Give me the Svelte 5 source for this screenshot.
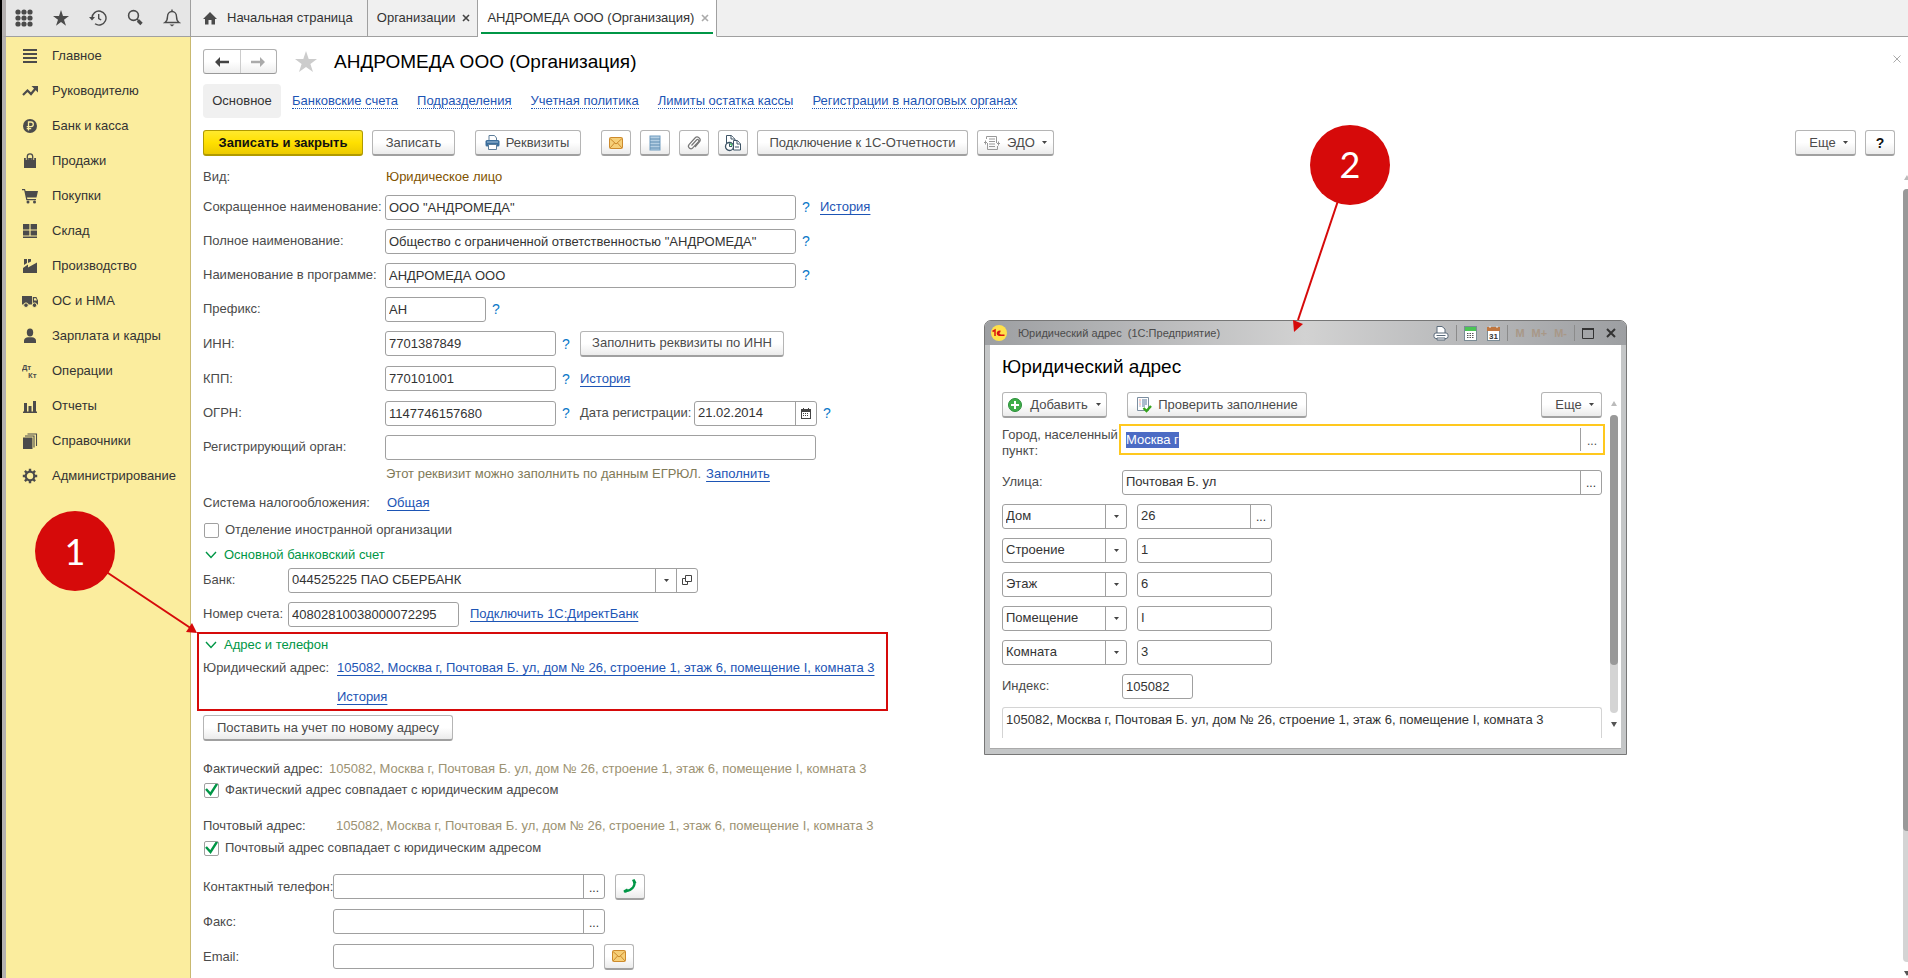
<script>
  import { onMount } from 'svelte';

  const menu = [
    ['list', 'Главное'],
    ['trend', 'Руководителю'],
    ['ruble', 'Банк и касса'],
    ['bag', 'Продажи'],
    ['cart', 'Покупки'],
    ['boxes', 'Склад'],
    ['factory', 'Производство'],
    ['truck', 'ОС и НМА'],
    ['person', 'Зарплата и кадры'],
    ['dtkt', 'Операции'],
    ['bars', 'Отчеты'],
    ['books', 'Справочники'],
    ['gear', 'Администрирование']
  ];
  const sections = [
    'Банковские счета',
    'Подразделения',
    'Учетная политика',
    'Лимиты остатка кассы',
    'Регистрации в налоговых органах'
  ];
  const address = '105082, Москва г, Почтовая Б. ул, дом № 26, строение 1, этаж 6, помещение I, комната 3';
  const parts = [
    ['Дом', '26', true],
    ['Строение', '1', false],
    ['Этаж', '6', false],
    ['Помещение', 'I', false],
    ['Комната', '3', false]
  ];
  let cityInput;
  onMount(() => {
    cityInput.focus();
    cityInput.select();
  });
</script>

{#snippet caret()}
  <svg class="caret" width="5" height="3" viewBox="0 0 5 3"><path d="M0 0h5L2.500 3z" fill="#444" /></svg>
{/snippet}

{#snippet mail()}
  <svg width="14" height="12" viewBox="0 0 14 12"><rect x=".5" y=".5" width="13" height="11" rx="1" fill="#f6cf78" stroke="#cd8a2c" /><path d="M1 1.500l6 5.500 6-5.500M1 11l4.500-5M13 11L8.500 6" fill="none" stroke="#cd8a2c" /></svg>
{/snippet}

{#snippet chevron()}
  <svg width="12" height="8" viewBox="0 0 12 8"><path d="M1 1l5 5.500L11 1" fill="none" stroke="#009646" stroke-width="1.400" /></svg>
{/snippet}

{#snippet menuIcon(name)}
  <svg width="16" height="16" viewBox="0 0 16 16" fill="#4b4b4b">
    {#if name === 'list'}
      <path d="M1 1h14v2H1zM1 5h14v2H1zM1 9h14v2H1zM1 13h14v2H1z" />
    {:else if name === 'trend'}
      <path d="M1 12l4.500-4.500 3.500 3.500 4.500-5.500" fill="none" stroke="#4b4b4b" stroke-width="2.200" /><path d="M9.500 3H16v6.500z" />
    {:else if name === 'ruble'}
      <circle cx="8" cy="8" r="7" /><path d="M6.500 12.500V4h2.500a2.300 2.300 0 0 1 0 4.600H4.700M4.700 10.600h4.500" fill="none" stroke="#faec9e" stroke-width="1.300" />
    {:else if name === 'bag'}
      <path d="M2 5h12v10H2z" /><path d="M5 7V4a3 3 0 0 1 6 0v3" fill="none" stroke="#faec9e" stroke-width="2.400" /><path d="M5.300 7V3.500a2.700 2.700 0 0 1 5.400 0V7" fill="none" stroke="#4b4b4b" stroke-width="1.300" />
    {:else if name === 'cart'}
      <path d="M0 1h3l.6 2H16l-1.500 6.500H5L5.300 11H14v1.300H4.300L2.200 2.300H0z" /><circle cx="6" cy="14" r="1.500" /><circle cx="12.500" cy="14" r="1.500" />
    {:else if name === 'boxes'}
      <path d="M1 1h6.400v5.500H1zM8.600 1H15v5.500H8.600zM1 7.500h6.400v5H1zM8.600 7.500H15v5H8.600zM1 13.500h14v1.500H1z" />
    {:else if name === 'factory'}
      <path d="M1 15v-5l5-3.500V9.500l9-5V15zM2 1h3v4L2 7zM6 1h3v2.500L6 5z" />
    {:else if name === 'truck'}
      <path d="M0 3h10v8.500H0zM10.800 4h3.600L16 7.500v4h-5.200z" /><path d="M12 5.300h2l1 2.200h-3z" fill="#faec9e" /><circle cx="4" cy="12.200" r="2.300" stroke="#faec9e" /><circle cx="12.500" cy="12.200" r="2.300" stroke="#faec9e" />
    {:else if name === 'person'}
      <ellipse cx="8" cy="4.500" rx="3.200" ry="4" /><path d="M2 15v-2.500c0-2 2-3 4-3.300h4c2 .3 4 1.300 4 3.300V15z" />
    {:else if name === 'dtkt'}
      <text x="0" y="7" class="tiny">Дт</text><text x="6" y="15" class="tiny">Кт</text>
    {:else if name === 'bars'}
      <path d="M1 13.500h14V15H1zM2 5h3v9H2zM6.500 8h3v6h-3zM11 3h3v11h-3z" />
    {:else if name === 'books'}
      <path d="M1 4.500h9.500V16H1z" /><path d="M3 3h9v11.500M5.500 1h9v12" fill="none" stroke="#4b4b4b" stroke-width="1.100" />
    {:else}
      <circle cx="8" cy="8" r="4.300" fill="none" stroke="#4b4b4b" stroke-width="2.200" /><path d="M8 .8v3M8 12.200v3M.8 8h3M12.200 8h3M2.900 2.900L5 5M11 11l2.100 2.100M2.900 13.100L5 11M11 5l2.100-2.100" stroke="#4b4b4b" stroke-width="2.400" />
    {/if}
  </svg>
{/snippet}

<div class="app">
  <header class="topbar">
    <div class="tools">
      <button class="plain" aria-label="Меню"><svg width="18" height="18" viewBox="0 0 18 18" fill="#4b4b4b">{#each [3, 9, 15] as x}{#each [3, 9, 15] as y}<circle cx={x} cy={y} r="2.600" />{/each}{/each}</svg></button>
      <button class="plain" aria-label="Избранное"><svg width="18" height="18" viewBox="0 0 18 18"><path d="M9 1l2 6h6l-5 3.700 2 6.100-5-3.800-5 3.800 2-6.100L1 7h6z" fill="#4b4b4b" /></svg></button>
      <button class="plain" aria-label="История"><svg width="18" height="18" viewBox="0 0 18 18" fill="none" stroke="#4b4b4b" stroke-width="1.400"><path d="M3 9A7 7 0 1 1 6 14.800M9.700 5v4.500l2.500 1.500" /><path d="M0 8h6L3 11.500z" fill="#4b4b4b" stroke="none" /></svg></button>
      <button class="plain" aria-label="Поиск"><svg width="18" height="18" viewBox="0 0 18 18" fill="none" stroke="#4b4b4b"><circle cx="7.500" cy="6.500" r="4.900" stroke-width="1.600" /><path d="M11 10l2 2" stroke-width="1.500" /><path d="M12 11.500l3.500 3.500" stroke-width="3.400" /></svg></button>
      <button class="plain" aria-label="Уведомления"><svg width="18" height="18" viewBox="0 0 18 18" fill="none" stroke="#4b4b4b" stroke-width="1.400"><path d="M2 13.500c2-1.500 2.500-3 2.500-6 0-3 2-5 4.500-5s4.500 2 4.500 5c0 3 .5 4.500 2.500 6z" /><path d="M9 .5v2" /><path d="M6.500 15.500h5L9 17.500z" fill="#4b4b4b" stroke="none" /></svg></button>
    </div>
    <nav class="tabs">
      <a class="tab home" href="#home"><svg width="14" height="13" viewBox="0 0 14 13"><path d="M7 0l7 7h-2v5.500H8.500V8h-3v4.500H2V7H0z" fill="#4b4b4b" /></svg>Начальная страница</a>
      <a class="tab" href="#orgs">Организации<svg width="8" height="8" viewBox="0 0 8 8"><path d="M1 1l6 6M7 1L1 7" stroke="#444" stroke-width="1.600" /></svg></a>
      <a class="tab active" href="#org">АНДРОМЕДА ООО (Организация)<svg width="8" height="8" viewBox="0 0 8 8"><path d="M1 1l6 6M7 1L1 7" stroke="#aaa" stroke-width="1.600" /></svg></a>
    </nav>
  </header>

  <div class="body">
    <aside>
      {#each menu as [icon, label]}
        <a href="#menu">{@render menuIcon(icon)}<span>{label}</span></a>
      {/each}
    </aside>

    <main>
      <div class="titlebar">
        <div class="nav">
          <button aria-label="Назад"><svg width="14" height="10" viewBox="0 0 14 10"><path d="M0 5l5-5v3.700h9v2.600H5V10z" fill="#444" /></svg></button>
          <button aria-label="Вперед"><svg width="14" height="10" viewBox="0 0 14 10"><path d="M14 5L9 0v3.700H0v2.600h9V10z" fill="#aaa" /></svg></button>
        </div>
        <svg width="24" height="22" viewBox="0 0 24 22"><path d="M12 0l2.700 8H23l-6.600 5 2.600 8-7-5-7 5 2.600-8L1 8h8.300z" fill="#ccc" /></svg>
        <h1>АНДРОМЕДА ООО (Организация)</h1>
        <button class="plain close" aria-label="Закрыть"><svg width="8" height="8" viewBox="0 0 8 8"><path d="M.5.5l7 7M7.500.5l-7 7" stroke="#aaa" /></svg></button>
      </div>

      <nav class="sections">
        <span class="current">Основное</span>
        {#each sections as s}<a href="#section">{s}</a>{/each}
      </nav>

      <div class="toolbar">
        <button class="btn primary">Записать и закрыть</button>
        <button class="btn save">Записать</button>
        <button class="btn icon-text"><svg width="15" height="15" viewBox="0 0 15 15"><path d="M4 5V.5h5.500L11.500 3v2" fill="#fff" stroke="#5d7d99" /><rect x=".5" y="5" width="14" height="6.500" rx="1.500" fill="#3b6e9c" /><path d="M2 7h11" stroke="#a9c4dc" /><path d="M3.500 9.500h8v5h-8z" fill="#fff" stroke="#5d7d99" /></svg>Реквизиты</button>
        <button class="btn square first" aria-label="Письмо">{@render mail()}</button>
        <button class="btn square" aria-label="Список"><svg width="12" height="16" viewBox="0 0 12 16"><rect x="1" y="1" width="10" height="14" fill="#b5cfe3" stroke="#6f9cc0" /><path d="M1 4h10M1 7h10M1 10h10M1 13h10" stroke="#5a8ab0" /></svg></button>
        <button class="btn square" aria-label="Файлы"><svg width="16" height="16" viewBox="0 0 16 16"><path d="M5.500 10.500l5-5.500a1.200 1.200 0 0 1 2 1.600L7 12.700a2.500 2.500 0 0 1-4-3L9 3a3 3 0 0 1 4.800 3.500L9 12" fill="none" stroke="#777" stroke-width="1.200" /></svg></button>
        <button class="btn square" aria-label="Отчеты"><svg width="18" height="18" viewBox="0 0 18 18" fill="#fff" stroke="#3e5466"><path d="M2.500 13V1.500h5L11 5v8" /><path d="M7 1.500V5h4" /><path d="M9.500 6.500h4l3 3.500v6h-7z" /><path d="M13 7v3h3.500M11 13h4" /><circle cx="5.500" cy="12.500" r="4" stroke-width="1.300" /><path d="M5.500 9v4l3-1.500A4 4 0 0 0 5.500 9z" fill="#1fb24a" stroke="none" /><path d="M5.500 9.500v3h2.500" /></svg></button>
        <button class="btn reports">Подключение к 1С-Отчетности</button>
        <button class="btn edo"><svg width="16" height="16" viewBox="0 0 16 16" fill="none" stroke="#999"><path d="M2.500 4V1.500h10V8M13.500 11v3.500h-10V8M5 4h6M5 6.500h6M5 9h6M5 11.500h6M0 7.500h3M13 8.500h3M1.500 5.500v4M14.500 6.500v4" /></svg>ЭДО{@render caret()}</button>
        <span class="grow"></span>
        <button class="btn more">Еще{@render caret()}</button>
        <button class="btn square help" aria-label="Справка">?</button>
      </div>

      <form class="form" onsubmit={(e) => e.preventDefault()}>
        <div class="row kind"><span class="lbl">Вид:</span><span class="brown">Юридическое лицо</span></div>
        <div class="row"><label class="lbl" for="short">Сокращенное наименование:</label><input id="short" class="long" value={'ООО "АНДРОМЕДА"'} /><span class="q">?</span><a href="#history">История</a></div>
        <div class="row"><label class="lbl" for="full">Полное наименование:</label><input id="full" class="long" value={'Общество с ограниченной ответственностью "АНДРОМЕДА"'} /><span class="q">?</span></div>
        <div class="row"><label class="lbl" for="name">Наименование в программе:</label><input id="name" class="long" value="АНДРОМЕДА ООО" /><span class="q">?</span></div>
        <div class="row"><label class="lbl" for="prefix">Префикс:</label><input id="prefix" class="short" value="АН" /><span class="q">?</span></div>
        <div class="row tall"><label class="lbl" for="inn">ИНН:</label><input id="inn" class="mid" value="7701387849" /><span class="q">?</span><button class="btn fill">Заполнить реквизиты по ИНН</button></div>
        <div class="row tall"><label class="lbl" for="kpp">КПП:</label><input id="kpp" class="mid" value="770101001" /><span class="q">?</span><a href="#history">История</a></div>
        <div class="row"><label class="lbl" for="ogrn">ОГРН:</label><input id="ogrn" class="mid" value="1147746157680" /><span class="q">?</span><label class="datelbl" for="date">Дата регистрации:</label><div class="field date"><input id="date" value="21.02.2014" /><button aria-label="Календарь"><svg width="10" height="11" viewBox="0 0 10 11"><path d="M0 1h10v10H0z" fill="#444" /><path d="M1 4h8v6H1z" fill="#fff" /><path d="M2 5.500h6M2 7.500h6" stroke="#444" stroke-dasharray="1 1" /><path d="M2.500 0v2M7.500 0v2" stroke="#444" /></svg></button></div><span class="q">?</span></div>
        <div class="row"><label class="lbl" for="organ">Регистрирующий орган:</label><input id="organ" class="organ" value="" /></div>
        <div class="row hint"><span class="olive">Этот реквизит можно заполнить по данным ЕГРЮЛ.</span><a href="#fill">Заполнить</a></div>
        <div class="row tax"><span class="lbl">Система налогообложения:</span><a href="#tax">Общая</a></div>
        <label class="check"><input type="checkbox" />Отделение иностранной организации</label>
        <h2 class="bank-head">{@render chevron()}Основной банковский счет</h2>
        <div class="row bank"><label class="lbl" for="bank">Банк:</label><div class="field bankfield"><input id="bank" value="044525225 ПАО СБЕРБАНК" /><button aria-label="Выбрать">{@render caret()}</button><button aria-label="Открыть"><svg width="10" height="10" viewBox="0 0 10 10" fill="none" stroke="#444"><path d="M3.500.5h6v6h-6zM3.500 3.500h-3v6h5v-3" /></svg></button></div></div>
        <div class="row bank"><label class="lbl" for="acc">Номер счета:</label><input id="acc" class="mid" value="40802810038000072295" /><a class="direct" href="#direct">Подключить 1С:ДиректБанк</a></div>

        <section class="marked">
          <h2>{@render chevron()}Адрес и телефон</h2>
          <div class="addr"><span class="lbl">Юридический адрес:</span><a href="#address">{address}</a></div>
          <div class="addr hist"><span class="lbl"></span><a href="#history">История</a></div>
        </section>

        <button class="btn register">Поставить на учет по новому адресу</button>
        <p class="static first-static"><span class="actual">Фактический адрес:</span><span class="sand">{address}</span></p>
        <label class="check"><input type="checkbox" checked />Фактический адрес совпадает с юридическим адресом</label>
        <p class="static second-static"><span class="postal">Почтовый адрес:</span><span class="sand">{address}</span></p>
        <label class="check"><input type="checkbox" checked />Почтовый адрес совпадает с юридическим адресом</label>
        <div class="row contact phone"><label class="lbl" for="phone">Контактный телефон:</label><div class="field"><input id="phone" /><button class="dots" aria-label="Выбрать телефон">...</button></div><button class="btn square" aria-label="Позвонить"><svg width="14" height="14" viewBox="0 0 14 14"><path d="M11 2c2 4.500-2 9.500-8 10" fill="none" stroke="#009646" stroke-width="2.200" /><path d="M9 1l2.500-1 2 4-2.800.8zM.5 11.500L4 9.500 5.500 12 3 13.800 1 13.500z" fill="#009646" /></svg></button></div>
        <div class="row contact"><label class="lbl" for="fax">Факс:</label><div class="field"><input id="fax" /><button class="dots" aria-label="Выбрать факс">...</button></div></div>
        <div class="row contact"><label class="lbl" for="email">Email:</label><input id="email" class="email" /><button class="btn square" aria-label="Написать письмо">{@render mail()}</button></div>
      </form>
    </main>
  </div>

  <div class="scroll page-scroll"><i class="up"></i><div class="track"><div class="thumb"></div></div><i class="down"></i></div>

  <div class="dialog" role="dialog" aria-label="Юридический адрес">
    <div class="caption">
      <svg class="logo" width="16" height="16" viewBox="0 0 16 16"><circle cx="8" cy="8" r="8" fill="#ffe14a" /><path d="M1.500 6.500L4 5v6M9.500 6.500a2 2 0 1 0-1 3.700h5M9 7.500a1 1 0 1 0 0 1.300" fill="none" stroke="#d8140f" stroke-width="1.500" /></svg>
      <span class="cap-text">Юридический адрес&nbsp; (1С:Предприятие)</span>
      <svg width="16" height="15" viewBox="0 0 16 15" fill="#fff" stroke="#5b6b7b"><path d="M4 7V.5h5L12 3v4" /><rect x="1" y="7" width="14" height="5.500" rx="2" /><path d="M3.500 9.500h9M4 12h8v2H4z" /></svg>
      <i class="sep"></i>
      <svg width="13" height="15" viewBox="0 0 13 15"><rect x=".5" y=".5" width="12" height="14" fill="#fff" stroke="#7b8b95" /><path d="M1 1h11v4H1z" fill="#4cc455" /><path d="M3 7.500h7.500M3 9.500h7.500M3 11.500h7.500" stroke="#555" stroke-dasharray="1.500 1" /></svg>
      <svg class="c-cal" width="13" height="15" viewBox="0 0 13 15"><rect x=".5" y="1.500" width="12" height="13" fill="#fff" stroke="#7b8b95" /><path d="M0 1h13v4H0z" fill="#c0763f" /><path d="M3 0v2M10 0v2" stroke="#eee" /><text x="2" y="12.500" class="day">31</text></svg>
      <i class="sep"></i>
      <button class="plain mem">M</button><button class="plain mem">M+</button><button class="plain mem">M-</button>
      <i class="sep"></i>
      <button class="plain" aria-label="Развернуть"><svg width="12" height="11" viewBox="0 0 12 11"><path d="M.5 1h11v9.500H.5z" fill="none" stroke="#333" /><path d="M0 1h12" stroke="#333" stroke-width="2" /></svg></button>
      <button class="plain" aria-label="Закрыть окно"><svg width="10" height="10" viewBox="0 0 10 10"><path d="M1 1l8 8M9 1L1 9" stroke="#333" stroke-width="2" /></svg></button>
    </div>
    <div class="pane">
      <h3>Юридический адрес</h3>
      <div class="dlg-tools">
        <button class="btn add"><svg width="14" height="14" viewBox="0 0 14 14"><circle cx="7" cy="7" r="6.500" fill="#3fae49" stroke="#2c8f3a" /><path d="M7 3v8M3 7h8" stroke="#fff" stroke-width="2" /></svg>Добавить{@render caret()}</button>
        <button class="btn verify"><svg width="16" height="16" viewBox="0 0 16 16"><path d="M1.500.5h11v13h-11z" fill="#fff" stroke="#7c8ea0" /><path d="M3.500 3h1M3.500 7h1" stroke="#d33" /><path d="M6 3h5M6 5h5M6 7h5M6 9h3M3.500 5h1M3.500 9h1" stroke="#56789a" /><path d="M7.500 11l3 3 4.500-5" fill="none" stroke="#35a51c" stroke-width="2.400" /></svg>Проверить заполнение</button>
        <span class="grow"></span>
        <button class="btn more">Еще{@render caret()}</button>
      </div>
      <div class="drow city"><label for="city">Город, населенный пункт:</label><div class="focus"><input id="city" bind:this={cityInput} value="Москва г" /><button class="dots" aria-label="Выбрать город">...</button></div></div>
      <div class="drow street"><label for="street">Улица:</label><div class="field"><input id="street" value="Почтовая Б. ул" /><button class="dots" aria-label="Выбрать улицу">...</button></div></div>
      {#each parts as [kind, value, pick]}
        <div class="drow part">
          <div class="field sel"><select aria-label="Тип: {kind}"><option>{kind}</option></select><span class="arrow">{@render caret()}</span></div>
          <div class="field val"><input aria-label={kind} {value} />{#if pick}<button class="dots" aria-label="Выбрать дом">...</button>{/if}</div>
        </div>
      {/each}
      <div class="drow index"><label for="index">Индекс:</label><input id="index" value="105082" /></div>
      <div class="summary">{address}</div>
      <div class="scroll dlg-scroll"><i class="up"></i><div class="track"><div class="thumb"></div></div><i class="down"></i></div>
    </div>
  </div>

  <svg class="pointer one" width="190" height="150" viewBox="0 0 190 150"><path d="M55 51L172 129" stroke="#d60a0a" stroke-width="2" /><path d="M177 133l-11-1 6-9z" fill="#d60a0a" /><circle cx="55" cy="51" r="40" fill="#d60a0a" /><text x="55" y="65">1</text></svg>
  <svg class="pointer two" width="100" height="220" viewBox="0 0 100 220"><path d="M60 45L8 200" stroke="#d60a0a" stroke-width="2" /><path d="M4 212l-1-12 10 4z" fill="#d60a0a" /><circle cx="60" cy="45" r="40" fill="#d60a0a" /><text x="60" y="58">2</text></svg>
</div>

<style>
  :global(body) { margin: 0; overflow: hidden; }
  .app { box-sizing: border-box; position: relative; height: 100vh; display: flex; flex-direction: column; overflow: hidden; border-left: 2px solid #000; background: #fff; font: 13px/16px "Liberation Sans", Arial, sans-serif; color: #4b4b4b; }
  .app :global(*) { box-sizing: border-box; }
  svg { display: block; flex: none; }
  button, input, select { font: inherit; color: inherit; }
  a { color: #1d55b5; text-decoration: underline; text-underline-offset: 3px; white-space: nowrap; }
  .plain { border: 0; background: none; padding: 0; display: flex; }
  .grow { flex: 1; }
  .topbar { display: flex; height: 37px; flex: none; background: #f0f0f0; border-bottom: 1px solid #a0a0a0; border-left: 4px solid #b4b0b0; }
  .tools { width: 185px; display: flex; align-items: center; gap: 19px; padding: 0 0 1px 9px; background: #e6e6e6; border-right: 1px solid #a0a0a0; }
  .tabs { display: flex; margin-bottom: -1px; }
  .tab { display: flex; align-items: center; gap: 7px; padding: 0 7px 0 9px; height: 37px; border-right: 1px solid #a0a0a0; border-bottom: 1px solid #a0a0a0; color: #333; text-decoration: none; }
  .tab.home { gap: 10px; padding: 0 14px 0 12px; }
  .tab.active { background: linear-gradient(#009646, #009646) 3px 32px / calc(100% - 6px) 2px no-repeat #fff; border-bottom-color: #fff; }
  .body { flex: 1; display: flex; min-height: 0; border-left: 4px solid #b4b0b0; }
  aside { width: 185px; flex: none; padding-top: 1px; background: #fbed9e; border-right: 1px solid #c9b970; }
  aside a { display: flex; align-items: center; gap: 14px; height: 35px; padding-left: 16px; color: #333; text-decoration: none; }
  .tiny { font: bold 7px "Open Sans", sans-serif; }
  main { flex: 1; min-width: 0; padding: 12px 13px 0 12px; }
  .titlebar { display: flex; align-items: center; height: 25px; }
  .nav { display: flex; width: 74px; height: 25px; margin-right: 17px; border: 1px solid #b0b0b0; border-bottom-color: #999; border-radius: 3px; background: linear-gradient(#fff 50%, #eee); }
  .nav button { flex: 1; display: flex; align-items: center; justify-content: center; border: 0; background: none; padding: 0; }
  .nav button + button { border-left: 1px solid #ccc; }
  h1 { margin: 0 0 0 16px; font-size: 19px; line-height: 24px; font-weight: 400; color: #000; flex: 1; }
  .close { margin: 0 -6px 6px 0; }
  .sections { display: flex; align-items: center; gap: 19px; margin-top: 10px; height: 34px; }
  .sections a { text-decoration: none; border-bottom: 1px dotted #1d55b5; line-height: 15px; }
  .current { width: 78px; margin-right: -8px; text-align: center; line-height: 34px; background: #f0f0f0; border-radius: 4px; color: #333; }
  .toolbar { display: flex; gap: 9px; margin-top: 12px; }
  .btn { height: 26px; flex: none; display: flex; align-items: center; justify-content: center; padding: 0; background: linear-gradient(#fff 50%, #ebebeb); border: 1px solid #b5b5b5; border-bottom: 2px solid #a0a0a0; border-radius: 3px; white-space: nowrap; }
  .primary { width: 160px; font-weight: bold; color: #111; background: linear-gradient(#ffe92e, #ffe000 50%, #ecca00); border-color: #b09a00; }
  .save { width: 83px; }
  .icon-text { width: 106px; margin-left: 11px; gap: 6px; padding-right: 2px; }
  .square { width: 30px; }
  .square.first { margin-left: 11px; }
  .reports { width: 211px; }
  .edo { width: 77px; gap: 7px; }
  .more { width: 61px; gap: 7px; padding-left: 6px; }
  .help { font-weight: bold; font-size: 14px; color: #111; }
  .row { display: flex; align-items: center; height: 34px; }
  .row.tall { height: 35px; }
  .row.kind { height: 34px; margin-top: 4px; margin-bottom: -4px; }
  .lbl { width: 182px; flex: none; white-space: nowrap; }
  .brown { color: #7f5300; padding-left: 1px; }
  .row > input, .field, .index input { height: 25px; flex: none; border: 1px solid #a0a0a0; border-radius: 3px; background: #fff; padding: 0 3px; color: #333; outline: 0; }
  .long { width: 411px; }
  .mid { width: 171px; }
  .short { width: 101px; }
  .organ { width: 431px; }
  .email { width: 261px; }
  .q { width: 24px; padding-left: 6px; flex: none; color: #0a78c8; font-size: 14px; }
  .fill { width: 204px; }
  .datelbl { width: 114px; }
  .field { display: flex; padding: 0; overflow: hidden; }
  .field input { flex: 1; min-width: 0; width: 0; border: 0; outline: 0; padding: 0 3px; background: none; color: #333; }
  .field button, .arrow { width: 21px; flex: none; display: flex; align-items: center; justify-content: center; padding: 0; border: 0; border-left: 1px solid #a0a0a0; background: none; }
  .field .dots, .focus .dots { font-size: 12px; padding-top: 2px; }
  .date { width: 123px; }
  .hint { height: 20px; padding-left: 183px; gap: 5px; }
  .olive { color: #7f7a58; }
  .tax { margin-top: 2px; }
  .tax a { padding-left: 2px; }
  .check { display: flex; align-items: center; gap: 6px; height: 20px; padding-left: 1px; }
  .check input { appearance: none; width: 15px; height: 15px; margin: 0; border: 1px solid #a0a0a0; border-radius: 2px; background: #fff; }
  .check input:checked { background: url("data:image/svg+xml,%3Csvg xmlns='http://www.w3.org/2000/svg' viewBox='0 0 15 15'%3E%3Cpath d='M2 6l4.500 5L13.500 0' fill='none' stroke='%23009646' stroke-width='2.400'/%3E%3C/svg%3E") border-box; }
  h2 { display: flex; align-items: center; gap: 7px; margin: 0; padding-left: 2px; height: 20px; font-size: 13px; font-weight: 400; color: #009646; }
  .bank-head { margin-top: 5px; margin-bottom: -2px; }
  .bank .lbl { width: 85px; }
  .bankfield { width: 410px; }
  .direct { margin-left: 11px; }
  .marked { width: 691px; height: 79px; margin: 1px 0 4px -6px; padding: 1px 0 0 4px; border: 2px solid #d60a0a; }
  .addr { display: flex; align-items: center; height: 26px; }
  .addr .lbl { width: 134px; }
  .hist { height: 31px; }
  .register { width: 250px; }
  .static { display: flex; margin: 0; height: 16px; white-space: nowrap; }
  .first-static { margin-top: 20px; margin-bottom: 3px; }
  .second-static { margin-top: 18px; margin-bottom: 4px; }
  .actual { width: 126px; }
  .postal { width: 133px; }
  .sand { color: #9c9272; }
  .contact { height: 35px; }
  .contact .lbl { width: 130px; }
  .contact .field { width: 272px; }
  .contact .btn { margin-left: 10px; }
  .phone { margin-top: 11px; }

  .scroll { position: absolute; display: flex; flex-direction: column; align-items: center; }
  .up, .down { border: 3px solid transparent; height: 5px; width: 6px; flex: none; }
  .up { border-top: 0; border-bottom: 5px solid #bbb; }
  .down { border-bottom: 0; border-top: 5px solid #555; }
  .track { flex: 1; width: 8px; margin: 9px 0; background: #d4d4d4; border-radius: 4px; }
  .thumb { height: 84%; background: #999; border-radius: 4px; }
  .page-scroll { right: -3px; top: 175px; bottom: 2px; }
  .page-scroll .thumb { height: 83%; }

  .dialog { position: absolute; left: 982px; top: 320px; width: 643px; height: 435px; border: 1px solid #777; border-radius: 7px 7px 0 0; background: #c4c6c7; padding: 0 5px 5px; }
  .caption { height: 24px; margin: 0 -5px; padding: 0 10px 0 6px; display: flex; align-items: center; gap: 7px; border-radius: 6px 6px 0 0; background: linear-gradient(90deg, #9d9fa2, #d2d2d2 50%, #9d9fa2); font-size: 11px; }
  .cap-text { flex: 1; margin-left: 4px; }
  .c-cal { margin-left: 3px; }
  .sep { width: 1px; height: 16px; background: #8b8b8b; }
  .mem { color: #a89888; font-weight: bold; }
  .day { font: bold 8px "Liberation Sans", sans-serif; fill: #333; }
  .caption .plain:last-child { margin-left: 5px; }
  .pane { position: relative; height: 404px; background: #fff; padding: 10px 19px 0 12px; border-bottom: 1px solid #aaa; }
  h3 { margin: 0; font-size: 19px; line-height: 24px; font-weight: 400; color: #000; }
  .dlg-tools { display: flex; margin-top: 13px; }
  .add { width: 105px; gap: 8px; }
  .verify { width: 180px; margin-left: 20px; gap: 6px; }
  .drow { display: flex; height: 34px; align-items: center; }
  .drow > label { width: 120px; flex: none; }
  .city { height: 47px; margin: 0 -3px 0 0; }
  .city > label { width: 117px; padding-top: 2px; }
  .focus { flex: 1; height: 31px; border: 2px solid #ffc81e; display: flex; align-items: stretch; margin-bottom: 4px; padding: 2px 0; }
  .focus input { flex: 1; min-width: 0; border: 0; outline: 0; padding: 0 5px; }
  .focus input::selection { background: #4c6bc4; color: #fff; }
  .focus button { width: 23px; padding: 0; border: 0; border-left: 1px solid #a0a0a0; background: none; }
  .street .field { flex: 1; }
  .part { gap: 10px; }
  .sel { width: 125px; }
  .sel select { appearance: none; flex: 1; border: 0; outline: 0; background: none; padding: 0 3px; color: #333; }
  .val { width: 135px; }
  .index input { width: 71px; }
  .summary { margin-top: 4px; height: 31px; padding: 4px 3px; border: 1px solid #d4d4d4; border-bottom: 0; border-radius: 3px 3px 0 0; color: #333; white-space: nowrap; }
  .dlg-scroll { right: 3px; top: 56px; bottom: 21px; }

  .pointer { position: absolute; pointer-events: none; }
  .pointer text { font: 36px Lato, sans-serif; fill: #fff; text-anchor: middle; }
  .one { left: 18px; top: 500px; }
  .two { left: 1288px; top: 120px; }
</style>
